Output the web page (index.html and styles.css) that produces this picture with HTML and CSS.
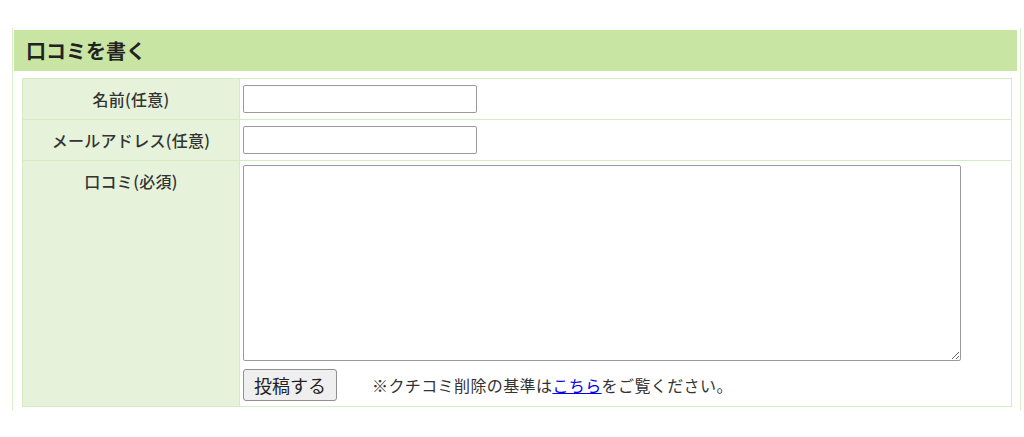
FILE: index.html
```html
<!DOCTYPE html>
<html lang="ja">
<head>
<meta charset="UTF-8">
<title>口コミを書く</title>
<link rel="stylesheet" href="styles.css">
</head>
<body>

<div class="review-box">
    <h2 class="review-title">口コミを書く</h2>

    <form class="review-form" onsubmit="return false;">
        <table class="review-table">
            <tr>
                <th>名前(任意)</th>
                <td><input type="text" class="txt"></td>
            </tr>
            <tr>
                <th>メールアドレス(任意)</th>
                <td><input type="text" class="txt"></td>
            </tr>
            <tr>
                <th>口コミ(必須)</th>
                <td>
                    <textarea class="comment"></textarea>
                    <div class="submit-row">
                        <button type="submit" class="btn">投稿する</button>
                        <span class="note">※クチコミ削除の基準は<a href="#">こちら</a>をご覧ください。</span>
                    </div>
                </td>
            </tr>
        </table>
    </form>
</div>

</body>
</html>
```

FILE: styles.css
```css
body {
    margin: 0;
    background: #fff;
    font-family: "Noto Sans CJK JP", "Noto Sans", sans-serif;
    color: #333;
}

/* 枠 */
.review-box {
    margin: 28px 0 0 12px;
    width: 1003px;
    padding: 2px 3px 3px 1px;
    border-left: 1px solid #d9eeca;
    border-right: 1px solid #d9eeca;
}

.review-title {
    margin: 0;
    height: 41px;
    line-height: 41px;
    padding-left: 12px;
    background: #c9e5a3;
    font-size: 20px;
    font-weight: bold;
    color: #222;
}

/* テーブル */
.review-form {
    margin: 7px 5px 0 8px;
}
.review-table {
    width: 100%;
    border-collapse: collapse;
}
.review-table th,
.review-table td {
    border: 1px solid #d5ebc2;
    vertical-align: top;
}
.review-table th {
    width: 208px;
    padding: 8px 4px;
    line-height: 24px;
    background: #e6f3da;
    font-size: 16px;
    font-weight: 500;
    letter-spacing: 0.3px;
    color: #333;
    text-align: center;
}
.review-table td {
    padding: 4px 3px 5px 3px;
    vertical-align: middle;
}
.review-table tr:last-child td {
    vertical-align: top;
}

.txt {
    display: block;
    box-sizing: border-box;
    width: 234px;
    height: 28px;
    border: 1px solid #9a9a9a;
    border-radius: 2px;
    font-size: 14px;
}

.comment {
    display: block;
    box-sizing: border-box;
    width: 718px;
    height: 196px;
    margin: 0 0 8px 0;
    border: 1px solid #9a9a9a;
    border-radius: 2px;
    font-size: 14px;
}

.submit-row {
    display: flex;
    align-items: center;
}
.btn {
    height: 32px;
    padding: 0 10px;
    background: #efefef;
    border: 1px solid #8f8f8f;
    border-radius: 3px;
    font-family: "Noto Sans CJK JP", sans-serif;
    font-size: 18px;
    color: #222;
}
.note {
    margin-left: 35px;
    font-size: 16px;
    letter-spacing: 0.4px;
    color: #333;
}
.note a {
    color: #0000ee;
}
```
